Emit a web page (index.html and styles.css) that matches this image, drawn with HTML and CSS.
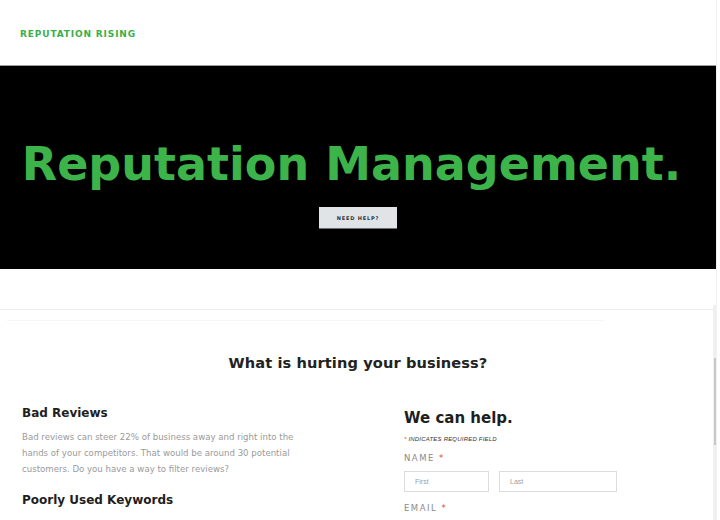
FILE: index.html
```html
<!DOCTYPE html>
<html>
<head>
<meta charset="utf-8">
<link rel="stylesheet" href="styles.css">
</head>
<body>
<div class="page">
  <header class="site-header">
    <span class="logo">REPUTATION RISING</span>
  </header>
  <section class="hero">
    <h1 class="hero-title">Reputation Management.</h1>
    <a class="hero-btn">NEED HELP?</a>
  </section>
  <div class="spacer"></div>
  <section class="content">
    <div class="faint-rule"></div>
    <h2 class="section-title">What is hurting your business?</h2>
    <div class="columns">
      <div class="col-left">
        <h3 class="item-title">Bad Reviews</h3>
        <p class="item-text">Bad reviews can steer 22% of business away and right into the hands of your competitors. That would be around 30 potential customers. Do you have a way to filter reviews?</p>
        <h3 class="item-title second">Poorly Used Keywords</h3>
        <p class="item-text">Are you using the keywords your potential customers are searching for online today?</p>
      </div>
      <div class="col-right">
        <h3 class="form-title">We can help.</h3>
        <div class="req-note"><span class="star">*</span> INDICATES REQUIRED FIELD</div>
        <label class="field-label">NAME <span class="star">*</span></label>
        <div class="name-row">
          <input class="input first" placeholder="First">
          <input class="input last" placeholder="Last">
        </div>
        <label class="field-label">EMAIL <span class="star">*</span></label>
      </div>
    </div>
  </section>
  <div class="scrollbar"><div class="thumb"></div></div>
</div>
</body>
</html>
```
FILE: styles.css
```css
html, body {
  margin: 0;
  padding: 0;
  background: #fff;
  overflow: hidden;
}
.page {
  position: relative;
  width: 716px;
  height: 520px;
  border-right: 1px solid #f0f0f0;
  overflow: hidden;
  font-family: "DejaVu Sans", sans-serif;
}
.site-header {
  height: 65px;
  display: flex;
  align-items: center;
  padding-left: 20px;
}
.logo {
  color: #3aae48;
  font-size: 9px;
  font-weight: bold;
  letter-spacing: 0.85px;
  margin-top: 3px;
}
.hero {
  height: 203px;
  background: #000;
  border-top: 1px solid #9c9c9c;
  display: flex;
  flex-direction: column;
  align-items: center;
}
.hero-title {
  margin: 70px 0 0 -13px;
  color: #3cb44a;
  font-size: 46px;
  line-height: 56px;
  font-weight: bold;
  white-space: nowrap;
}
.hero-btn {
  margin-top: 15px;
  width: 78px;
  height: 21px;
  background: #e1e4e7;
  border-bottom: 1px solid #6b6e72;
  display: flex;
  align-items: center;
  justify-content: center;
  font-size: 5px;
  font-weight: bold;
  letter-spacing: 0.8px;
  color: #2a3140;
}
.spacer {
  height: 40px;
  border-bottom: 1px solid #ececec;
}
.content {
  position: relative;
}
.faint-rule {
  margin: 10px 0 0 7px;
  width: 598px;
  height: 1px;
  background: #f6f6f6;
}
.section-title {
  margin: 33px 0 0 0;
  text-align: center;
  font-size: 14.6px;
  font-weight: bold;
  color: #222;
  letter-spacing: 0.1px;
}
.columns {
  display: flex;
  margin-top: 35px;
}
.col-left {
  width: 300px;
  margin-left: 22px;
}
.col-right {
  margin-left: 82px;
}
.item-title {
  margin: 0;
  font-size: 12px;
  font-weight: bold;
  color: #1e1e1e;
}
.item-title.second {
  margin-top: 16px;
}
.item-text {
  margin: 9px 0 0 0;
  font-size: 8.6px;
  line-height: 16px;
  color: #9a9a9a;
  width: 290px;
}
.form-title {
  margin: 3px 0 0 0;
  font-size: 15px;
  font-weight: bold;
  color: #1e1e1e;
}
.req-note {
  margin-top: 9px;
  font-family: "Liberation Sans", sans-serif;
  font-size: 6px;
  font-style: italic;
  color: #333;
  letter-spacing: 0.2px;
}
.star {
  color: #e0463c;
}
.field-label {
  display: block;
  margin-top: 11px;
  font-size: 8.5px;
  letter-spacing: 1.5px;
  color: #8a8a8a;
}
.name-row {
  display: flex;
  gap: 10px;
  margin-top: 8px;
}
.input {
  box-sizing: border-box;
  height: 21px;
  border: 1px solid #dcdcdc;
  padding: 0 10px;
  font-family: "Liberation Sans", sans-serif;
  font-size: 7px;
  color: #999;
  outline: none;
}
.input::placeholder {
  color: #a0a0a0;
}
.input.first { width: 85px; }
.input.last { width: 118px; }
.name-row + .field-label {
  margin-top: 11px;
}
.scrollbar {
  position: absolute;
  right: -1px;
  top: 305px;
  width: 4px;
  height: 215px;
  background: #f0f0f0;
}
.thumb {
  position: absolute;
  top: 53px;
  left: 1px;
  width: 3px;
  height: 87px;
  background: #c8c8c8;
}
```
